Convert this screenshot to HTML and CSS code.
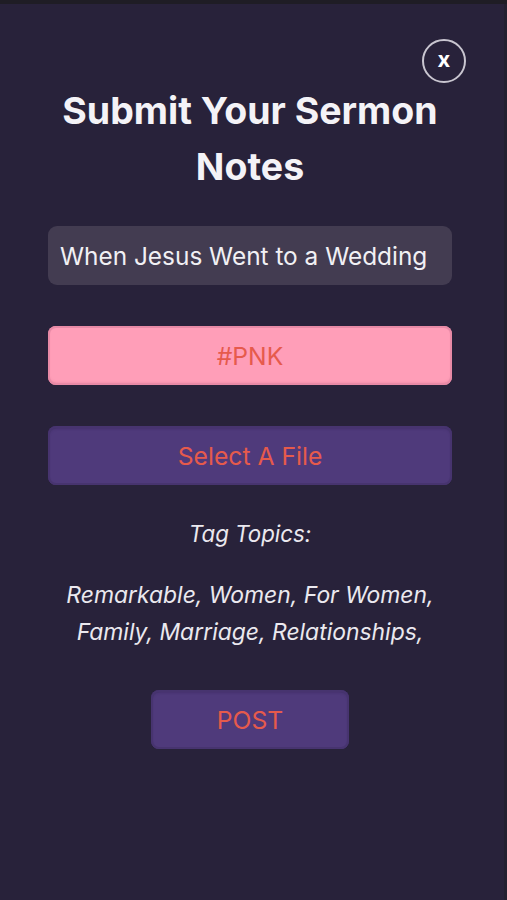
FILE: index.html
```html
<!DOCTYPE html>
<html>
<head>
<meta charset="utf-8">
<link rel="stylesheet" href="styles.css">
</head>
<body>
<div class="topbar"></div>
<div class="page">
  <main class="modal">
    <div class="close-row"><button class="close">x</button></div>
    <h1 class="title">Submit Your Sermon Notes</h1>
    <div class="field">When Jesus Went to a Wedding</div>
    <button class="btn pink">#PNK</button>
    <button class="btn purple">Select A File</button>
    <p class="tag-label">Tag Topics:</p>
    <p class="tags">Remarkable, Women, For Women, Family, Marriage, Relationships,</p>
    <button class="btn purple post">POST</button>
  </main>
  <div class="edge"></div>
</div>
</body>
</html>
```

FILE: styles.css
```css
html, body {
  margin: 0;
  padding: 0;
  height: 100%;
  background: #28223a;
  font-family: Inter, "Noto Sans", sans-serif;
}
.topbar {
  height: 4px;
  background: #1f1d25;
}
.page {
  display: flex;
  height: 896px;
}
.edge {
  width: 3px;
  background: #232030;
}
.modal {
  flex: 1;
  min-width: 0;
  display: flex;
  flex-direction: column;
  align-items: center;
  padding: 0 52px 0 48px;
}
.close-row {
  align-self: stretch;
  display: flex;
  justify-content: flex-end;
  padding-top: 35px;
  margin-right: -14px;
}
.close {
  width: 44px;
  height: 44px;
  border-radius: 50%;
  border: 2px solid #c9c6d0;
  background: transparent;
  color: #ffffff;
  font-family: Inter, sans-serif;
  font-weight: 700;
  font-size: 22px;
  line-height: 1;
  padding: 0 0 4px;
  display: flex;
  align-items: center;
  justify-content: center;
}
.title {
  align-self: stretch;
  margin: 0 -10px;
  color: #f4f3f7;
  font-size: 37.5px;
  font-weight: 700;
  line-height: 56px;
  text-align: center;
}
.field {
  margin-top: 31px;
  align-self: stretch;
  height: 59px;
  box-sizing: border-box;
  background: #433c51;
  border-radius: 9px;
  color: #f1f0f4;
  font-size: 24.4px;
  display: flex;
  align-items: center;
  padding-left: 12px;
}
.btn {
  align-self: stretch;
  height: 59px;
  border: none;
  border-radius: 8px;
  font-family: Inter, sans-serif;
  font-size: 24.7px;
  color: #e65a4c;
  margin-top: 41px;
}
.pink {
  background: #ff9eb8;
  box-shadow: inset 0 0 0 2px #e88aa6, inset 0 -2px 3px rgba(160, 60, 90, 0.25);
}
.purple {
  background: #4f3a7b;
  box-shadow: inset 0 0 0 2px #47346f, inset 0 2px 3px rgba(40, 25, 70, 0.5);
}
.tag-label {
  margin: 30px 0 0;
  color: #ebe9ef;
  font-style: italic;
  font-size: 22.3px;
  line-height: 37px;
}
.tags {
  align-self: stretch;
  margin: 25px -8px 0;
  color: #ebe9ef;
  font-style: italic;
  font-size: 22.9px;
  line-height: 37px;
  text-align: center;
}
.post {
  align-self: center;
  width: 198px;
  margin-top: 39px;
}
```
